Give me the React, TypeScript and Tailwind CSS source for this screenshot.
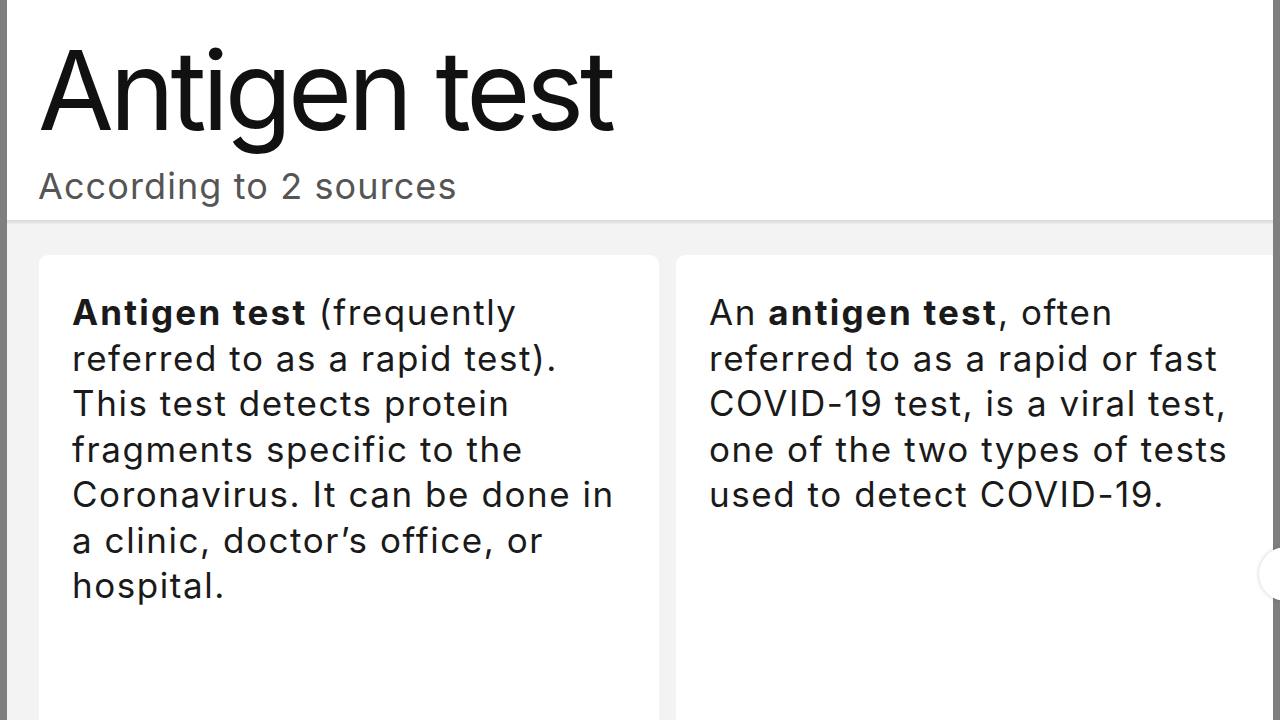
import React from "react";

export default function App() {
  return (
    <div className="relative flex h-[720px] w-[1280px] overflow-hidden bg-white" style={{ fontFamily: "Inter, 'Noto Sans', sans-serif" }}>
      <div className="w-[7px] shrink-0 bg-[#7f7f7f]" />
      <div className="flex min-w-0 flex-1 flex-col">
        <div className="bg-white pl-[31px] pt-[30px] pb-[13px]">
          <h1 className="text-[110px] font-normal leading-[120px] tracking-[-4.2px] text-[#111]">Antigen test</h1>
          <p className="mt-[15px] text-[36px] leading-[42px] tracking-[1.1px] text-[#555]">According to 2 sources</p>
        </div>
        <div className="h-[4px] bg-gradient-to-b from-[#d8d8d8] to-[#ececec]" />
        <div className="flex flex-1 gap-[17px] overflow-hidden bg-[#f3f3f3] pl-[32px] pt-[31px]">
          <div className="w-[620px] shrink-0 rounded-t-[9px] bg-white px-[33px] pt-[35px]">
            <p className="text-[35px] leading-[45.5px] tracking-[1.55px] text-[#1a1a1a]">
              <b className="font-bold tracking-[2.2px]">Antigen test</b> (frequently referred to as a rapid test). This test detects protein fragments specific to the Coronavirus. It can be done in a clinic, doctor’s office, or hospital.
            </p>
          </div>
          <div className="w-[620px] shrink-0 rounded-t-[9px] bg-white px-[33px] pt-[35px]">
            <p className="text-[35px] leading-[45.5px] tracking-[1.55px] text-[#1a1a1a]">
              An <b className="font-bold tracking-[2.2px]">antigen test</b>, often referred to as a rapid or fast COVID-19 test, is a viral test, one of the two types of tests used to detect COVID-19.
            </p>
          </div>
        </div>
      </div>
      <div className="w-[7px] shrink-0 bg-[#7f7f7f]" />
      <div className="absolute left-[1259px] top-[547px] h-[54px] w-[54px] rounded-full bg-white shadow-[0_0_4px_rgba(0,0,0,0.2)]" />
    </div>
  );
}
